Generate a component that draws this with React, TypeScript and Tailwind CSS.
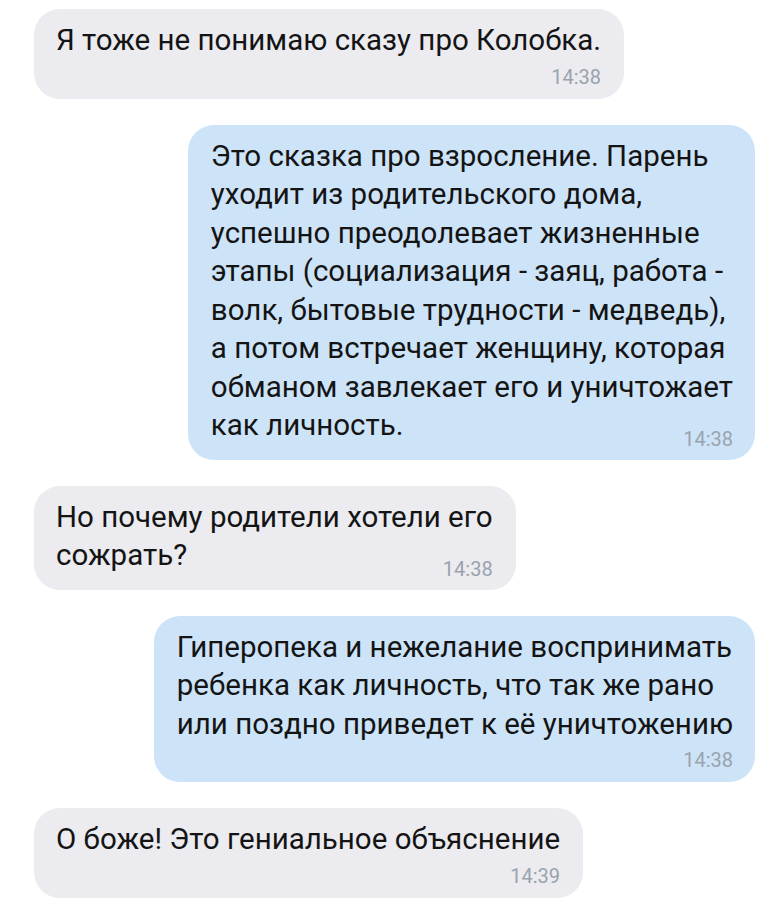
import React from "react";

type Msg = { lines: string[]; time: string; out: boolean; inline: boolean };

const msgs: Msg[] = [
  { lines: ["Я тоже не понимаю сказу про Колобка."], time: "14:38", out: false, inline: false },
  {
    lines: [
      "Это сказка про взросление. Парень",
      "уходит из родительского дома,",
      "успешно преодолевает жизненные",
      "этапы (социализация - заяц, работа -",
      "волк, бытовые трудности - медведь),",
      "а потом встречает женщину, которая",
      "обманом завлекает его и уничтожает",
      "как личность.",
    ],
    time: "14:38",
    out: true,
    inline: true,
  },
  { lines: ["Но почему родители хотели его", "сожрать?"], time: "14:38", out: false, inline: true },
  {
    lines: [
      "Гиперопека и нежелание воспринимать",
      "ребенка как личность, что так же рано",
      "или поздно приведет к её уничтожению",
    ],
    time: "14:38",
    out: true,
    inline: false,
  },
  { lines: ["О боже! Это гениальное объяснение"], time: "14:39", out: false, inline: false },
];

function Bubble({ m }: { m: Msg }) {
  const body = m.inline ? m.lines.slice(0, -1) : m.lines;
  const last = m.lines[m.lines.length - 1];
  return (
    <div
      className={
        m.out
          ? "self-end mr-[23px] w-fit rounded-[26px] bg-[#cde3f8] pl-[23px] pr-[22px] pt-3"
          : "self-start ml-[34px] w-fit rounded-[26px] bg-[#ebebf0] pl-[22px] pr-[23px] pt-3"
      }
    >
      <div className="text-[29.5px] leading-[38.5px] text-[#141414] whitespace-nowrap">
        {body.map((l, i) => (
          <div key={i}>{l}</div>
        ))}
      </div>
      {m.inline ? (
        <div className="flex items-end justify-between gap-6 pb-[15px]">
          <div className="text-[29.5px] leading-[38.5px] text-[#141414] whitespace-nowrap">{last}</div>
          <div className="text-[20px] leading-6 -mb-[6px] text-[#9aa3ad]">{m.time}</div>
        </div>
      ) : (
        <div className="flex justify-end pt-[5px] pb-[10px]">
          <div className="text-[20px] leading-6 text-[#9aa3ad]">{m.time}</div>
        </div>
      )}
    </div>
  );
}

export default function App() {
  return (
    <div
      className="w-[778px] h-[911px] bg-white flex flex-col gap-[26px] pt-[9px] overflow-hidden"
      style={{ fontFamily: "Roboto, 'Noto Sans', sans-serif" }}
    >
      {msgs.map((m, i) => (
        <Bubble key={i} m={m} />
      ))}
    </div>
  );
}
